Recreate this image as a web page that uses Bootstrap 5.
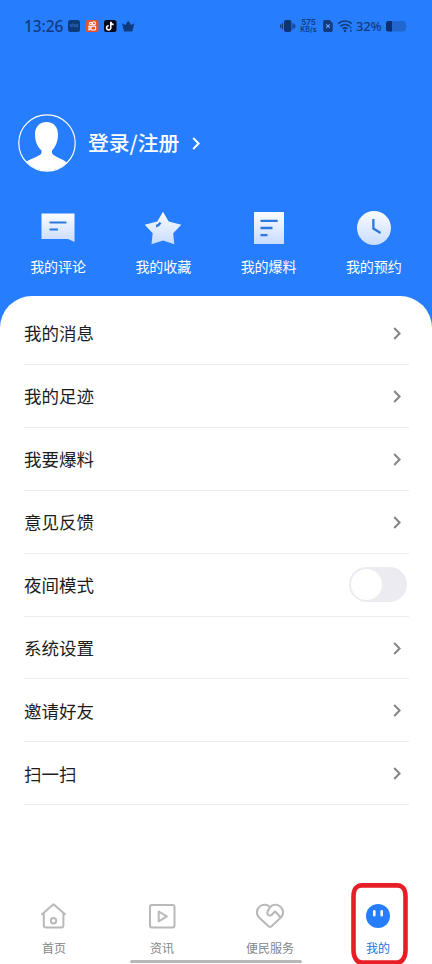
<!DOCTYPE html>
<html lang="zh-CN">
<head>
<meta charset="utf-8">
<meta name="viewport" content="width=device-width, initial-scale=1">
<title>我的</title>
<link rel="stylesheet" href="https://cdn.jsdelivr.net/npm/bootstrap@5.3.0/dist/css/bootstrap.min.css">
<style>
  body { font-family: "Noto Sans CJK SC", sans-serif; background: #267eff; color: #1c1c1c; }
  svg { display: block; flex: none; overflow: visible; }
  .screen { width: 432px; height: 964px; }
  .status { height: 52px; padding: 0 24px; color: #123a7c; }
  .clock { font: 500 15.5px/20px "Noto Sans", sans-serif; width: 39px; letter-spacing: -.1px; }
  .rate { font: 600 7.2px/8px Inter, sans-serif; width: 19px; }
  .rate-num { font-size: 8px; }
  .pct { font: 500 13px/18px "Noto Sans", sans-serif; width: 26px; letter-spacing: -.2px; }
  .profile { padding: 61px 0 0 18px; }
  .login { font-size: 20.8px; line-height: 30px; font-weight: 500; margin: 0 13px 2px 12px; }
  .quick { padding: 38px 5.5px 0; height: 123px; }
  .quick-text { font-size: 14px; line-height: 20px; margin-top: 11px; }
  .sheet { border-radius: 32px 32px 0 0; padding-top: 6px; }
  .menu { padding: 0 23px 0 24px; }
  .entry { height: 62.86px; border-bottom: 1px solid #ececee; font-size: 17.5px; padding: 1px 8px 0 0; }
  .entry:first-child { height: 63.2px; }
  .entry svg { color: #858585; }
  .switch { width: 58px; height: 35px; border-radius: 18px; background: #ebebf1; padding: 2px; margin: -2px -6px 0 0; }
  .knob { width: 31px; height: 31px; border-radius: 50%; background: #fff; }
  .tabs { height: 76px; padding-top: 14px; color: #b9b9b9; }
  .tab-text { font-size: 12px; line-height: 18px; margin-top: 9px; color: #858585; }
  .tab-on .tab-text { color: #2470d8; }
  .home-bar { left: 130px; top: 960px; width: 172px; height: 3px; border-radius: 2px; background: #b8b8b8; }
  .marker { left: 351px; top: 883px; }
</style>
</head>
<body>
<svg width="0" height="0" class="position-absolute" aria-hidden="true">
  <defs>
    <linearGradient id="fade" x1="0" y1="0" x2="0" y2="1"><stop offset="0" stop-color="#fafcff"/><stop offset="1" stop-color="#c9dcff"/></linearGradient>
    <symbol id="chev" viewBox="0 0 8 13"><path d="M1.2 1 6.6 6.5 1.2 12" fill="none" stroke="currentColor" stroke-width="2"/></symbol>
  </defs>
</svg>
<main class="screen position-relative overflow-hidden d-flex flex-column">
  <header class="status d-flex align-items-center">
    <span class="clock">13:26</span>
    <svg class="ms-1" width="62" height="14" viewBox="0 0 62 14" transform="translate(1 0)">
      <rect x="0" y="1" width="12" height="12" rx="2.5" fill="#0d3a79"/><text x="6" y="8.3" text-anchor="middle" font-family="Noto Sans" font-size="4.5" fill="#4587dc">vivo</text>
      <rect x="18" y="1" width="12.5" height="12" rx="2.5" fill="#e7562b"/>
      <g fill="none" stroke="#fff" stroke-width="1.1"><circle cx="22.7" cy="4.5" r="1.3"/><circle cx="26" cy="4.3" r="1.6"/><rect x="23" y="7.1" width="4.6" height="3.9" rx="1"/><path d="m23 8.2-2-1v3.6l2-1"/></g>
      <rect x="36" y="1" width="12.5" height="12" rx="2.5" fill="#08091c"/>
      <path d="M42.8 2.8v6a2.1 2.1 0 1 1-2.1-2.1M42.8 3.2c.3 1.6 1.4 2.3 2.8 2.4" fill="none" stroke="#fff" stroke-width="1.6"/>
      <path d="m54 4.2 3.2 1.8 3-4.2 3 4.2 3.2-1.8-2.1 8.2h-8.2Z" fill="#103a7e"/>
    </svg>
    <svg class="ms-auto" width="15" height="14" viewBox="0 0 15 14"><rect x="4" y="1" width="7.4" height="12" rx="2" fill="#0f3472"/><path d="M2.4 4.2v6M.6 5.5v3.3M13 4.2v6M14.7 5.5v3.3" stroke="#0f3472" stroke-width="1.1"/></svg>
    <span class="rate ms-1 d-flex flex-column align-items-center"><span class="rate-num">575</span><span>KB/s</span></span>
    <svg width="34" height="14" viewBox="0 0 34 14" class="ms-1">
      <path d="M3 1h4.500l3.200 3v7.200a1.8 1.8 0 0 1-1.8 1.8H3A1.8 1.8 0 0 1 1.200 11.200V2.800A1.8 1.8 0 0 1 3 1Z" fill="#123a7c"/><path d="m4.200 5.300 3.600 3.600m0-3.600L4.200 8.900" stroke="#6ca9ff" stroke-width="1.100"/>
      <g fill="none" stroke="#123a7c" stroke-width="1.700"><path d="M16.200 4.600a10.200 10.200 0 0 1 13.600 0M18.300 7.300a7 7 0 0 1 9.400 0M20.500 9.900a4 4 0 0 1 5 0"/><path d="M28.800 7.800v1.700M28.800 11v1.900" stroke-width="1.300"/></g><circle cx="23" cy="12" r="1.200" fill="#123a7c"/>
    </svg>
    <span class="pct">32%</span>
    <svg class="ms-1" width="22" height="12" viewBox="0 0 22 12"><rect x="0" y="1" width="20" height="10.500" rx="2.500" fill="#2167cf"/><path d="M2.500 1H6v10.500H2.500A2.500 2.500 0 0 1 0 9V3.500A2.500 2.500 0 0 1 2.500 1Z" fill="#0d3269"/><path d="M20.300 4.500q1.500 1.800 0 3.500Z" fill="#2167cf"/></svg>
  </header>

  <section class="profile d-flex align-items-center text-white">
    <svg width="58" height="60" viewBox="0 0 58 60">
      <clipPath id="face"><circle cx="29" cy="30" r="28"/></clipPath>
      <path clip-path="url(#face)" fill="#fff" d="M28.500 9C36 9 40 14.500 40 21.500c0 7-2.500 12.500-6 16v2.500c1.500 4 11 5 18 12V60H4v-8c7-7 18-8 19.500-12v-2.500C19.500 34 17 28.500 17 21.500 17 14.500 21 9 28.500 9Z"/>
      <circle cx="29" cy="30" r="28.200" fill="none" stroke="#fff" stroke-width="1.200"/>
    </svg>
    <span class="login">登录/注册</span>
    <svg width="8" height="13"><use href="#chev"/></svg>
  </section>

  <nav class="quick row g-0 text-white text-center">
    <div class="col d-flex flex-column align-items-center">
      <svg width="34" height="34" viewBox="0 0 34 34"><path d="M.500 2.500h33V31L27 28H.500Z" fill="url(#fade)"/><path d="M8.500 11.500h17M8.500 18.500h8.500" stroke="#2b78df" stroke-width="2.200"/></svg>
      <span class="quick-text">我的评论</span>
    </div>
    <div class="col d-flex flex-column align-items-center">
      <svg width="38" height="34" viewBox="0 0 38 34"><path d="m19 .800 5.700 9.700 12.600 3.200-8.100 8.500 1.100 11L19 29.500 7.500 33.200l1.200-11L.700 13.700l12.600-3.200Z" fill="url(#fade)"/><path d="M12 15.300q2.700-.500 4.500-3.600" fill="none" stroke="#2b78df" stroke-width="2.400"/></svg>
      <span class="quick-text">我的收藏</span>
    </div>
    <div class="col d-flex flex-column align-items-center">
      <svg width="30" height="34" viewBox="0 0 30 34"><path d="M0 1h30v32H0Z" fill="url(#fade)"/><path d="M6.500 9.800h17.200M6.500 17h12M6.500 24.200h7" stroke="#2b78df" stroke-width="2.300"/></svg>
      <span class="quick-text">我的爆料</span>
    </div>
    <div class="col d-flex flex-column align-items-center">
      <svg width="34" height="34" viewBox="0 0 34 34"><circle cx="17" cy="17" r="17" fill="url(#fade)"/><path d="M16.400 8v9.600l7.200 4.300" fill="none" stroke="#2b78df" stroke-width="2.300"/></svg>
      <span class="quick-text">我的预约</span>
    </div>
  </nav>

  <section class="sheet bg-white flex-grow-1 d-flex flex-column">
    <div class="menu">
      <div class="entry d-flex align-items-center justify-content-between"><span>我的消息</span><svg width="8" height="13"><use href="#chev"/></svg></div>
      <div class="entry d-flex align-items-center justify-content-between"><span>我的足迹</span><svg width="8" height="13"><use href="#chev"/></svg></div>
      <div class="entry d-flex align-items-center justify-content-between"><span>我要爆料</span><svg width="8" height="13"><use href="#chev"/></svg></div>
      <div class="entry d-flex align-items-center justify-content-between"><span>意见反馈</span><svg width="8" height="13"><use href="#chev"/></svg></div>
      <div class="entry d-flex align-items-center justify-content-between"><span>夜间模式</span><div class="switch" role="switch" aria-checked="false"><div class="knob"></div></div></div>
      <div class="entry d-flex align-items-center justify-content-between"><span>系统设置</span><svg width="8" height="13"><use href="#chev"/></svg></div>
      <div class="entry d-flex align-items-center justify-content-between"><span>邀请好友</span><svg width="8" height="13"><use href="#chev"/></svg></div>
      <div class="entry d-flex align-items-center justify-content-between"><span>扫一扫</span><svg width="8" height="13"><use href="#chev"/></svg></div>
    </div>
    <nav class="tabs row g-0 mt-auto text-center">
      <div class="col d-flex flex-column align-items-center">
        <svg width="28" height="28" viewBox="0 0 28 28"><g fill="none" stroke="currentColor" stroke-width="2" stroke-linejoin="round" stroke-linecap="round"><path d="M2 12.200 13.500 2.200 25 12.200M3.800 11v12.500a2 2 0 0 0 2 2h15.600a2 2 0 0 0 2-2V11"/><circle cx="13.500" cy="18.700" r="2.700"/></g></svg>
        <span class="tab-text">首页</span>
      </div>
      <div class="col d-flex flex-column align-items-center">
        <svg width="28" height="28" viewBox="0 0 28 28"><g fill="none" stroke="currentColor" stroke-width="2" stroke-linejoin="round"><rect x="2" y="3" width="24.500" height="22.500" rx="2"/><path d="M10.700 9.500v9.800l8.100-4.900Z"/></g></svg>
        <span class="tab-text">资讯</span>
      </div>
      <div class="col d-flex flex-column align-items-center">
        <svg width="30" height="28" viewBox="0 0 30 28"><path d="M15 5.300C12.500 2.200 8 2 4.800 4.500 1.200 7.500 1 12.300 3.800 15.300L13.800 24.500q1.200 1 2.400 0L26.200 15.300C29 12.300 28.800 7.500 25.200 4.500 22 2 17.500 2.200 15 5.300L12.800 9c-1.500 2.500.500 4.800 2.800 4.500 2.200-.3 2.200-2.800 4.600-4l5 5.500" fill="none" stroke="currentColor" stroke-width="2.100" stroke-linejoin="round" stroke-linecap="round"/></svg>
        <span class="tab-text">便民服务</span>
      </div>
      <div class="tab-on col d-flex flex-column align-items-center">
        <svg width="28" height="28" viewBox="0 0 28 28"><circle cx="14" cy="14" r="12" fill="#267eff"/><path d="M10.300 9.300v4M17.700 9.300v4" stroke="#fff" stroke-width="2.600" stroke-linecap="round"/></svg>
        <span class="tab-text">我的</span>
      </div>
    </nav>
  </section>
  <div class="home-bar position-absolute"></div>
  <svg class="marker position-absolute" width="57" height="81" viewBox="0 0 57 81"><path d="M2.500 14q0-8 3.500-10 1.500-1.600 5-1.600h35q3.500 0 5 1.600 3.500 2 3.500 10v53q0 7-3.500 10.500-1.500 2-5 2H11q-3.500 0-5-2Q2.500 74 2.500 67Z" fill="none" stroke="#e81e27" stroke-width="4.600" stroke-linejoin="round"/></svg>
</main>
<script src="https://cdn.jsdelivr.net/npm/bootstrap@5.3.0/dist/js/bootstrap.bundle.min.js"></script>
</body>
</html>
